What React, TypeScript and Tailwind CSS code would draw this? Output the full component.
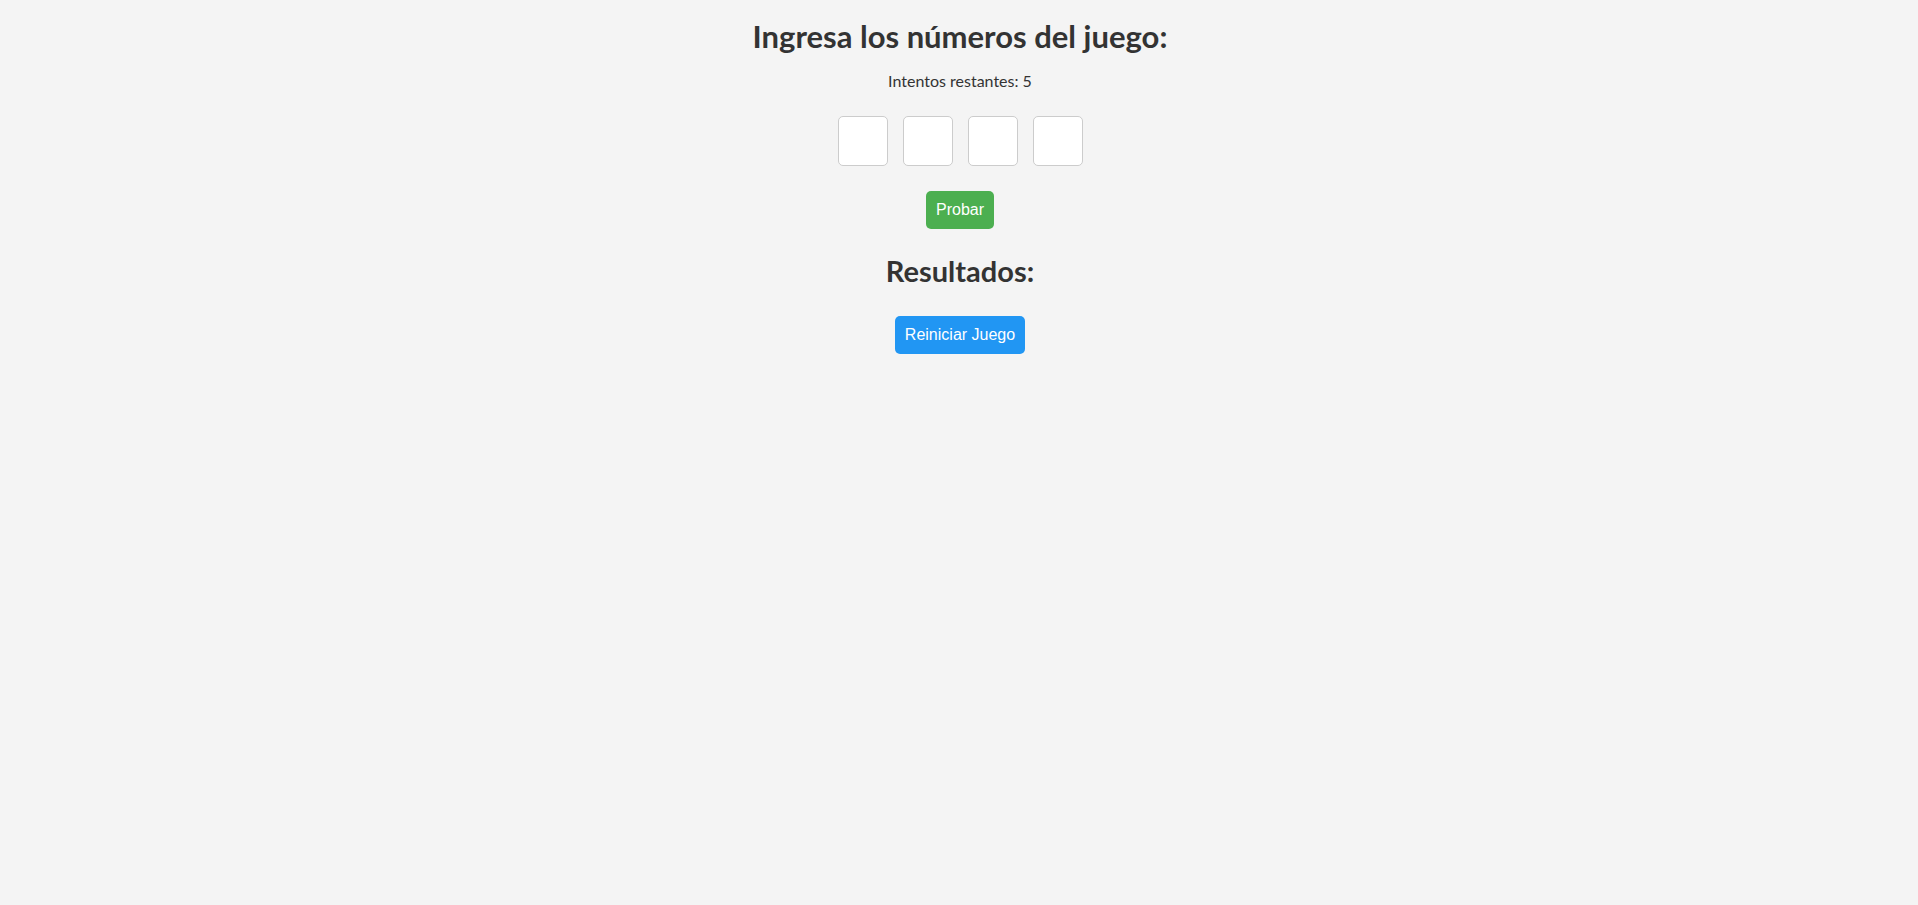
import { useState } from "react";

const App: React.FC = () => {
  const [digits, setDigits] = useState<string[]>(["", "", "", ""]);

  const setDigit = (i: number, v: string) => {
    const next = [...digits];
    next[i] = v.slice(-1);
    setDigits(next);
  };

  return (
    <div className="min-h-screen bg-[#f4f4f4] text-[#333] font-['Lato','Open_Sans',sans-serif]">
      <div className="flex flex-col items-center pt-4 pl-[2px]">
        <h1 className="text-[31px] leading-[40px] font-bold">Ingresa los números del juego:</h1>
        <p className="mt-[13px] text-[16px] leading-6">Intentos restantes: 5</p>
        <div className="mt-[23px] flex gap-[15px]">
          {digits.map((d, i) => (
            <input
              key={i}
              value={d}
              onChange={(e) => setDigit(i, e.target.value)}
              className="w-[50px] h-[50px] bg-white border border-[#ccc] rounded-[5px] text-center text-xl outline-none"
            />
          ))}
        </div>
        <button className="mt-[25px] h-[38px] w-[68px] bg-[#4caf50] text-white rounded-[5px] text-base font-['Liberation_Sans',Arial,sans-serif]">
          Probar
        </button>
        <h2 className="mt-[25px] text-[29px] leading-[34px] font-bold">Resultados:</h2>
        <button className="mt-[28px] h-[38px] w-[130px] bg-[#2196f3] text-white rounded-[5px] text-base font-['Liberation_Sans',Arial,sans-serif]">
          Reiniciar Juego
        </button>
      </div>
    </div>
  );
};

export default App;
